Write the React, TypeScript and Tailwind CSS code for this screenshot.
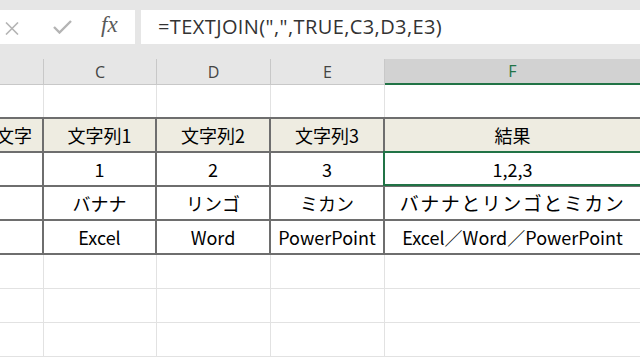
import React from "react";

const JP = { fontFamily: '"Noto Sans CJK JP", "Noto Sans", sans-serif' };

type Cell = { text?: string; cls?: string };

function Row({ cells, dark, head, selected }: { cells: Cell[]; dark?: boolean; head?: boolean; selected?: boolean }) {
  const widths = ["w-[44px]", "w-[113px]", "w-[114px]", "w-[114px]", "flex-1"];
  return (
    <div className={`flex h-[34px] ${dark ? "border-b-2 border-[#6e6e6e]" : "border-b border-[#e2e2e2]"} ${head ? "bg-[#eeece1]" : "bg-white"}`}>
      {widths.map((w, i) => (
        <div
          key={i}
          className={`${w} shrink-0 relative flex items-center whitespace-nowrap text-[18px] text-black ${i < 4 ? (dark ? "border-r-2 border-[#6e6e6e]" : "border-r border-[#e2e2e2]") : ""} ${i === 0 ? "justify-end pr-[10px] overflow-hidden" : "justify-center"}`}
          style={JP}
        >
          <span className={`shrink-0 ${cells[i]?.cls ?? ""}`}>{cells[i]?.text ?? ""}</span>
          {selected && i === 4 && <div className="absolute left-[-2px] top-[-2px] right-[-4px] bottom-[-1px] border-2 border-[#217346]" />}
        </div>
      ))}
    </div>
  );
}

export default function App() {
  const ui = { fontFamily: '"Open Sans", "Noto Sans", sans-serif' };
  return (
    <div className="w-[640px] h-[360px] overflow-hidden bg-white relative">
      {/* Formula bar area */}
      <div className="h-[59px] bg-[#e6e6e6] pt-[10px] flex gap-[6px]">
        <div className="w-[135px] h-[34px] bg-white relative">
          <svg className="absolute left-[5px] top-[12px]" width="14" height="13" viewBox="0 0 14 13">
            <path d="M1 0.5 L13 12.5 M13 0.5 L1 12.5" stroke="#b4b4b4" strokeWidth="1.6" fill="none" />
          </svg>
          <svg className="absolute left-[53px] top-[10px]" width="19" height="14" viewBox="0 0 19 14">
            <path d="M1 7 L6.5 12.5 L18 1" stroke="#b4b4b4" strokeWidth="2.4" fill="none" />
          </svg>
          <span className="absolute left-[101px] top-[0px] text-[23px] leading-[30px] italic text-[#5a5a5a]" style={{ fontFamily: '"Liberation Serif", "DejaVu Serif", serif' }}>fx</span>
        </div>
        <div className="flex-1 h-[34px] bg-white flex items-center pl-[17px] text-[20px] text-[#333] tracking-[0.4px]" style={ui}>
          =TEXTJOIN(",",TRUE,C3,D3,E3)
        </div>
      </div>
      {/* Column headers */}
      <div className="flex h-[26px] bg-[#e6e6e6] border-b border-[#c8c8c8]">
        <div className="w-[44px] shrink-0 border-r border-[#c8c8c8]" />
        <div className="w-[113px] shrink-0 border-r border-[#c8c8c8] flex items-center justify-center text-[16px] text-[#444]" style={ui}>C</div>
        <div className="w-[114px] shrink-0 border-r border-[#c8c8c8] flex items-center justify-center text-[16px] text-[#444]" style={ui}>D</div>
        <div className="w-[114px] shrink-0 border-r border-[#c8c8c8] flex items-center justify-center text-[16px] text-[#444]" style={ui}>E</div>
        <div className="flex-1 bg-[#d2d2d2] border-b-2 border-[#217346] flex items-center justify-center text-[16px] text-[#217346] -mb-px" style={ui}>
          F
        </div>
      </div>
      <div className="h-[34px] flex border-b-2 border-[#6e6e6e]">
        <div className="w-[44px] shrink-0 border-r border-[#e2e2e2]" />
        <div className="w-[113px] shrink-0 border-r border-[#e2e2e2]" />
        <div className="w-[114px] shrink-0 border-r border-[#e2e2e2]" />
        <div className="w-[114px] shrink-0 border-r border-[#e2e2e2]" />
        <div className="flex-1" />
      </div>
      <Row dark head cells={[{ text: "文字" }, { text: "文字列1" }, { text: "文字列2" }, { text: "文字列3" }, { text: "結果" }]} />
      <Row dark selected cells={[{}, { text: "1" }, { text: "2" }, { text: "3" }, { text: "1,2,3" }]} />
      <Row dark cells={[{}, { text: "バナナ" }, { text: "リンゴ" }, { text: "ミカン" }, { text: "バナナとリンゴとミカン", cls: "text-[19px] tracking-[1.5px]" }]} />
      <Row dark cells={[{}, { text: "Excel" }, { text: "Word" }, { text: "PowerPoint" }, { text: "Excel／Word／PowerPoint" }]} />
      <Row cells={[]} />
      <Row cells={[]} />
      <Row cells={[]} />
    </div>
  );
}
